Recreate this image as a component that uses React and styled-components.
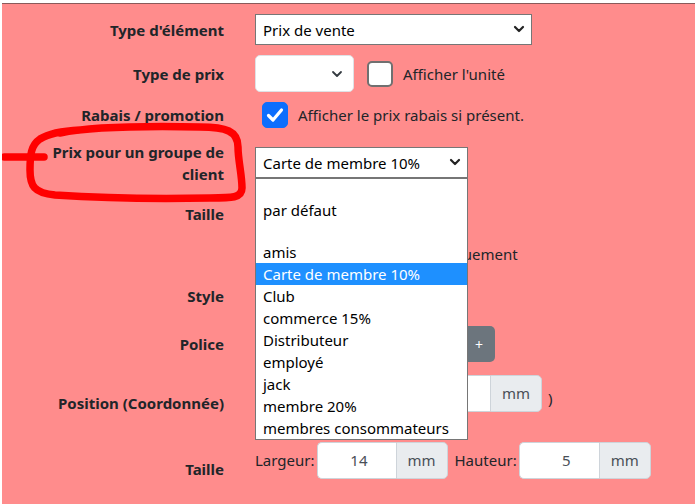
import React from "react";
import styled, { createGlobalStyle } from "styled-components";

const Global = createGlobalStyle`
  html, body { margin: 0; padding: 0; background: #fff; }
  body { font-family: "Noto Sans", "Open Sans", sans-serif; color: #212529; }
  * { box-sizing: border-box; }
`;

const Page = styled.div`
  position: relative;
  margin: 3px 0 0 2px;
  height: 501px;
  background: #ff8c8c;
  border-top: 1px solid #8a5a5a;
  overflow: hidden;
  font-size: 15px;
`;

const Form = styled.div`
  display: flex;
  flex-direction: column;
  padding-top: 7px;
`;

const Row = styled.div`
  display: grid;
  grid-template-columns: 222px 1fr;
  column-gap: 31px;
  align-items: center;
  height: ${(p) => p.$h}px;
`;

const Label = styled.div`
  font-weight: 700;
  text-align: right;
  line-height: 22px;
  padding-top: ${(p) => p.$shift || 0}px;
`;

const Control = styled.div`
  display: flex;
  align-items: center;
  position: relative;
  gap: ${(p) => p.$gap || 0}px;
  padding-left: ${(p) => p.$pl || 0}px;
`;

const NativeSelect = styled.div`
  position: relative;
  width: ${(p) => p.$w}px;
  height: 31px;
  background: #fff;
  border: 1px solid #767676;
  padding: 0 0 0 7px;
  display: flex;
  align-items: center;
  color: #000;
`;

const BsSelect = styled.div`
  width: ${(p) => p.$w}px;
  height: 37px;
  background: #fff;
  border: 1px solid #dee2e6;
  border-radius: 5px;
  display: flex;
  align-items: center;
  justify-content: flex-end;
  padding-right: 10px;
`;

const Chevron = ({ color = "#222", w = 2.2 }) => (
  <svg width="12" height="10" viewBox="0 0 12 10">
    <path d="M2 3 L6 7 L10 3" fill="none" stroke={color} strokeWidth={w} strokeLinecap="round" strokeLinejoin="round" />
  </svg>
);

const ArrowSlot = styled.span`
  position: absolute;
  right: 6px;
  top: 9px;
  display: flex;
`;

const Box = styled.span`
  width: 26px;
  height: 26px;
  border-radius: 5px;
  border: ${(p) => (p.$checked ? "1px solid #0d6efd" : "2px solid #707070")};
  background: ${(p) => (p.$checked ? "#0d6efd" : "#fff")};
  display: inline-flex;
  align-items: center;
  justify-content: center;
  flex: none;
`;

const CheckLabel = styled.span`
  color: #212529;
  line-height: 24px;
  margin-left: ${(p) => p.$ml || 0}px;
`;

const Dropdown = styled.ul`
  position: absolute;
  left: -1px;
  top: 30px;
  width: 213px;
  margin: 0;
  padding: 0;
  list-style: none;
  background: #fff;
  border: 1px solid #767676;
  z-index: 5;
`;

const Option = styled.li`
  height: ${(p) => (p.$blank ? 20 : 22)}px;
  line-height: 22px;
  padding-left: 7px;
  white-space: nowrap;
  color: ${(p) => (p.$active ? "#fff" : "#000")};
  background: ${(p) => (p.$active ? "#1e90ff" : "transparent")};
`;

const Group = styled.div`
  display: flex;
  height: 37px;
`;

const Input = styled.div`
  width: ${(p) => p.$w}px;
  height: 37px;
  background: #fff;
  border: 1px solid #ced4da;
  border-right: none;
  border-radius: 5px 0 0 5px;
  display: flex;
  align-items: center;
  justify-content: flex-end;
  padding-right: 28px;
  color: #495057;
`;

const Addon = styled.div`
  width: 52px;
  height: 37px;
  background: #e9ecef;
  border: 1px solid #ced4da;
  border-radius: 0 5px 5px 0;
  display: flex;
  align-items: center;
  justify-content: center;
  color: #495057;
`;

const Plain = styled.span`
  color: #212529;
  margin-left: ${(p) => p.$ml || 0}px;
  padding-top: ${(p) => p.$pt || 0}px;
`;

const GrayBtn = styled.div`
  width: 32px;
  height: 36px;
  background: #6c757d;
  border-radius: 0 5px 5px 0;
  color: #fff;
  display: flex;
  align-items: center;
  justify-content: center;
  font-size: 14px;
`;

const Scribble = styled.svg`
  position: absolute;
  left: -2px;
  top: -4px;
  pointer-events: none;
  z-index: 6;
`;

const options = [
  { t: "", blank: true },
  { t: "par défaut" },
  { t: "", blank: true },
  { t: "amis" },
  { t: "Carte de membre 10%", active: true },
  { t: "Club" },
  { t: "commerce 15%" },
  { t: "Distributeur" },
  { t: "employé" },
  { t: "jack" },
  { t: "membre 20%" },
  { t: "membres consommateurs" },
];

export default function App() {
  return (
    <>
      <Global />
      <Page>
        <Form>
          <Row $h={37}>
            <Label>Type d'élément</Label>
            <Control>
              <NativeSelect $w={277}>
                Prix de vente
                <ArrowSlot><Chevron /></ArrowSlot>
              </NativeSelect>
            </Control>
          </Row>
          <Row $h={51}>
            <Label>Type de prix</Label>
            <Control $gap={13}>
              <BsSelect $w={99}><Chevron color="#343a40" w={1.8} /></BsSelect>
              <Box />
              <CheckLabel $ml={-3}>Afficher l'unité</CheckLabel>
            </Control>
          </Row>
          <Row $h={32}>
            <Label>Rabais / promotion</Label>
            <Control $gap={10} $pl={7}>
              <Box $checked>
                <svg width="18" height="16" viewBox="0 0 18 16">
                  <path d="M2.5 8.5 L7 13 L15.5 3" fill="none" stroke="#fff" strokeWidth="3.2" strokeLinecap="round" strokeLinejoin="round" />
                </svg>
              </Box>
              <CheckLabel>Afficher le prix rabais si présent.</CheckLabel>
            </Control>
          </Row>
          <Row $h={63}>
            <Label>Prix pour un groupe de<br />client</Label>
            <Control>
              <NativeSelect $w={213}>
                Carte de membre 10%
                <ArrowSlot><Chevron /></ArrowSlot>
                <Dropdown>
                  {options.map((o, i) => (
                    <Option key={i} $blank={o.blank} $active={o.active}>{o.t}</Option>
                  ))}
                </Dropdown>
              </NativeSelect>
            </Control>
          </Row>
          <Row $h={40}>
            <Label>Taille</Label>
            <Control />
          </Row>
          <Row $h={40}>
            <span />
            <Control $gap={10} $pl={7}>
              <Box />
              <CheckLabel>Afficher le prix net uniquement</CheckLabel>
            </Control>
          </Row>
          <Row $h={44}>
            <Label>Style</Label>
            <Control />
          </Row>
          <Row $h={52}>
            <Label>Police</Label>
            <Control $pl={208}>
              <GrayBtn>+</GrayBtn>
            </Control>
          </Row>
          <Row $h={46}>
            <Label $shift={20}>Position (Coordonnée)</Label>
            <Control $gap={6} $pl={160}>
              <Group>
                <Input $w={75} />
                <Addon>mm</Addon>
              </Group>
              <Plain $pt={10}>)</Plain>
            </Control>
          </Row>
          <Row $h={88}>
            <Label $shift={18}>Taille</Label>
            <Control $gap={2}>
              <Plain>Largeur:</Plain>
              <Group>
                <Input $w={79}>14</Input>
                <Addon>mm</Addon>
              </Group>
              <Plain $ml={5}>Hauteur:</Plain>
              <Group>
                <Input $w={80}>5</Input>
                <Addon>mm</Addon>
              </Group>
            </Control>
          </Row>
        </Form>
        <Scribble width="260" height="210" viewBox="0 0 260 210">
          <g fill="none" stroke="#ff0000" strokeWidth="7.5" strokeLinecap="round" strokeLinejoin="round">
            <path d="M4 157 L44 157" />
            <path d="M60 133 C90 127, 150 126, 200 127 C226 127, 238 131, 238 147 C238 160, 242 175, 242 188 C242 198, 232 198, 210 198 C160 199, 100 198, 55 195 C34 193, 30 186, 30 170 C30 155, 31 145, 40 139 C48 134, 60 131, 80 130" />
          </g>
        </Scribble>
      </Page>
    </>
  );
}
